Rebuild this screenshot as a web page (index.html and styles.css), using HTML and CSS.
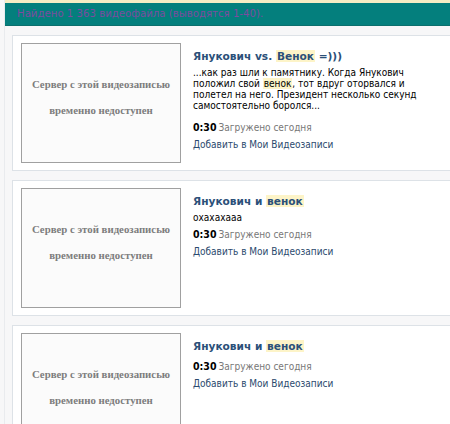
FILE: index.html
```html
<!DOCTYPE html>
<html lang="ru">
<head>
<meta charset="utf-8">
<title>Видеозаписи</title>
<link rel="stylesheet" href="styles.css">
</head>
<body>
<div class="page">
  <div class="topline"></div>
  <div class="summary">Найдено 1 363 видеофайла (выводятся 1-40).</div>
  <div class="list">
    <div class="video">
      <div class="thumb"><p>Сервер с этой видеозаписью</p><p>временно недоступен</p></div>
      <div class="info">
        <div class="title">Янукович vs. <span class="hl">Венок</span> =)))</div>
        <div class="desc long">...как раз шли к памятнику. Когда Янукович<br>положил свой <span class="hl">венок</span>, тот вдруг оторвался и<br>полетел на него. Президент несколько секунд<br>самостоятельно боролся...</div>
        <div class="meta"><b>0:30</b><span class="upl">Загружено сегодня</span></div>
        <a class="add">Добавить в Мои Видеозаписи</a>
      </div>
    </div>
    <div class="video">
      <div class="thumb"><p>Сервер с этой видеозаписью</p><p>временно недоступен</p></div>
      <div class="info">
        <div class="title">Янукович и <span class="hl">венок</span></div>
        <div class="desc">охахахааа</div>
        <div class="meta"><b>0:30</b><span class="upl">Загружено сегодня</span></div>
        <a class="add">Добавить в Мои Видеозаписи</a>
      </div>
    </div>
    <div class="video">
      <div class="thumb"><p>Сервер с этой видеозаписью</p><p>временно недоступен</p></div>
      <div class="info">
        <div class="title">Янукович и <span class="hl">венок</span></div>
        <div class="meta"><b>0:30</b><span class="upl">Загружено сегодня</span></div>
        <a class="add">Добавить в Мои Видеозаписи</a>
      </div>
    </div>
  </div>
</div>
</body>
</html>
```
FILE: styles.css
```css
html, body {
  margin: 0;
  padding: 0;
  background: #f7f7f8;
  overflow: hidden;
}
body {
  font-family: "DejaVu Sans Condensed", "DejaVu Sans", sans-serif;
}
.page {
  margin-left: 4px;
  border-left: 1px solid #e9ebee;
  min-height: 424px;
}
.topline {
  height: 3px;
  background: #f6edc4;
}
.summary {
  height: 22px;
  line-height: 21px;
  background: #047f7d;
  border-bottom: 1px solid #0b6f6d;
  color: #7b4c9f;
  font-size: 11.3px;
  padding-left: 12px;
  white-space: nowrap;
}
.list {
  padding: 9px 0 0 7px;
}
.video {
  display: flex;
  background: #fff;
  border: 1px solid #dde2e7;
  border-right: none;
  padding: 7px 8px;
  margin-bottom: 9px;
}
.thumb {
  flex: none;
  width: 158px;
  height: 118px;
  border: 1px solid #a0a0a0;
  background: #fbfbfb;
  text-align: center;
  font-family: "Liberation Serif", "Times New Roman", serif;
  font-weight: bold;
  font-size: 10.8px;
  color: #7d7d7d;
}
.thumb p {
  margin: 0;
  line-height: 26px;
  white-space: nowrap;
}
.thumb p:first-child {
  margin-top: 27px;
}
.info {
  flex: 1;
  margin-left: 12px;
  padding-top: 4px;
  white-space: nowrap;
}
.title {
  font-family: "DejaVu Sans", sans-serif;
  font-weight: bold;
  font-size: 10.6px;
  line-height: 19px;
  color: #2b5079;
  margin-bottom: 1px;
}
.hl {
  background: #fdf4c8;
  padding: 0 1px;
}
.desc {
  font-size: 10px;
  line-height: 11px;
  color: #000;
  margin-bottom: 3px;
}
.desc.long {
  margin-bottom: 8px;
}
.meta {
  margin-top: 2px;
  font-size: 10px;
  line-height: 16px;
}
.meta b {
  color: #000;
  font-size: 10.5px;
}
.upl {
  color: #777;
  margin-left: 2px;
}
.add {
  display: block;
  margin-top: 1px;
  font-size: 10px;
  line-height: 16px;
  color: #2b4a6e;
}
```
